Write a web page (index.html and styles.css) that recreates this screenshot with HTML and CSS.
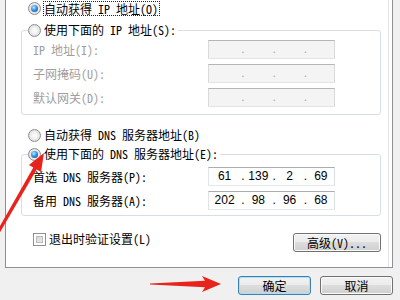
FILE: index.html
```html
<!DOCTYPE html>
<html lang="zh-CN">
<head>
    <meta charset="UTF-8">
    <meta name="viewport" content="width=device-width, initial-scale=1.0">
    <title>Internet 协议版本 4 (TCP/IPv4) 属性</title>
    <link rel="stylesheet" href="styles.css">
</head>
<body>
    <div class="pagina">
        <label class="opcion primera"><span class="radio marcado"></span><span class="foco">自动获得 IP 地址(O)</span></label>

        <fieldset class="grupo ip">
            <legend><label class="opcion"><span class="radio"></span>使用下面的 IP 地址(S):</label></legend>
            <div class="campo apagado">
                <span class="etiqueta">IP 地址(I):</span>
                <div class="ipbox"><span class="seg"></span><span class="seg"><i>.</i></span><span class="seg"><i>.</i></span><span class="seg"><i>.</i></span></div>
            </div>
            <div class="campo apagado">
                <span class="etiqueta">子网掩码(U):</span>
                <div class="ipbox"><span class="seg"></span><span class="seg"><i>.</i></span><span class="seg"><i>.</i></span><span class="seg"><i>.</i></span></div>
            </div>
            <div class="campo apagado">
                <span class="etiqueta">默认网关(D):</span>
                <div class="ipbox"><span class="seg"></span><span class="seg"><i>.</i></span><span class="seg"><i>.</i></span><span class="seg"><i>.</i></span></div>
            </div>
        </fieldset>

        <label class="opcion dns-auto"><span class="radio"></span>自动获得 DNS 服务器地址(B)</label>

        <fieldset class="grupo dns">
            <legend><label class="opcion"><span class="radio marcado"></span>使用下面的 DNS 服务器地址(E):</label></legend>
            <div class="campo">
                <span class="etiqueta">首选 DNS 服务器(P):</span>
                <div class="ipbox"><span class="seg"><b>61</b></span><span class="seg"><i>.</i><b>139</b></span><span class="seg"><i>.</i><b>2</b></span><span class="seg"><i>.</i><b>69</b></span></div>
            </div>
            <div class="campo">
                <span class="etiqueta">备用 DNS 服务器(A):</span>
                <div class="ipbox"><span class="seg"><b>202</b></span><span class="seg"><i>.</i><b>98</b></span><span class="seg"><i>.</i><b>96</b></span><span class="seg"><i>.</i><b>68</b></span></div>
            </div>
        </fieldset>

        <div class="pie">
            <label class="casilla"><span class="check"></span>退出时验证设置(L)</label>
            <button class="boton avanzado">高级(V)...</button>
        </div>
    </div>

    <div class="acciones">
        <button class="boton defecto">确定</button>
        <button class="boton">取消</button>
    </div>

    <!-- flechas rojas de la captura -->
    <svg class="flechas" width="400" height="300" viewBox="0 0 400 300">
        <polygon points="44,153 41,172.1 36.7,169.6 -3.3,237.8 -5.9,236.3 33.3,167.6 28.9,165.1" fill="#e8231b"/>
        <polygon points="221,284 202,292 205,287.2 150,284.6 150,283.6 205,280.8 202,276" fill="#e8231b"/>
    </svg>
</body>
</html>
```

FILE: styles.css
```css
*{
    box-sizing: border-box;
}
body{
    margin: 0;
    width: 400px;
    height: 300px;
    overflow: hidden;
    position: relative;
    background-color: #f0f0f0;
    color: #000;
    font: 12px/16px "Noto Sans Mono CJK SC", "Noto Sans CJK SC", sans-serif;
}
.pagina{
    margin-left: 5px;
    width: 388px;
    height: 268px;
    background-color: #fff;
    border: 1px solid #8e9096;
    border-top: none;
    padding: 0 11px 0 15px;
    box-shadow: inset -3px 0 0 #fff, inset -4px 0 0 #e4e4e4;
}
.opcion{
    display: flex;
    align-items: center;
    gap: 3px;
    height: 16px;
    white-space: nowrap;
}
.primera{
    padding-left: 7px;
}
.foco{
    border: 1px dotted #222;
    line-height: 13px;
    padding: 0 1px 0 0;
    margin-left: -1px;
}
.radio{
    flex: none;
    position: relative;
    width: 13px;
    height: 13px;
    border-radius: 50%;
    border: 1px solid #8e8f8f;
    background: radial-gradient(circle at 50% 50%, #fff 0, #f3f3f3 35%, #cfcfcf 100%);
}
.radio.marcado::after{
    content: "";
    position: absolute;
    left: 2px;
    top: 2px;
    width: 7px;
    height: 7px;
    border-radius: 50%;
    background: radial-gradient(circle at 40% 35%, #b4ecff 0, #3b93e0 45%, #0d3a78 100%);
}
.grupo{
    margin: 6px 0 0;
    padding: 2px 6px 7px;
    border: 1px solid #d5dfe5;
    border-radius: 3px;
    min-width: 0;
}
.grupo legend{
    padding: 0 2px 0 0;
}
.dns{
    margin-top: 3px;
    padding-top: 5px;
    padding-bottom: 5px;
}
.dns-auto{
    margin-top: 12px;
    padding-left: 7px;
}
.campo{
    display: flex;
    align-items: center;
    height: 19px;
    padding-left: 5px;
}
.campo + .campo{
    margin-top: 5px;
}
.etiqueta{
    width: 175px;
    white-space: nowrap;
}
.apagado .etiqueta{
    color: #9e9e9e;
}
.ipbox{
    display: flex;
    width: 127px;
    height: 19px;
    border: 1px solid;
    border-color: #abadb3 #dbdfe6 #e3e9ef #e2e3ea;
    background-color: #fff;
    font: 12px/17px "Liberation Sans", sans-serif;
}
.apagado .ipbox{
    background-color: #f4f4f4;
    border-color: #b5b5b5 #d9d9d9 #e4e4e4 #d9d9d9;
    color: #a8a8a8;
}
.seg{
    flex: 1;
    display: flex;
}
.seg i{
    font-style: normal;
    width: 5px;
    padding-left: 1px;
}
.seg b{
    flex: 1;
    font-weight: normal;
    text-align: center;
}
.pie{
    display: flex;
    justify-content: space-between;
    align-items: flex-start;
    margin-top: 15px;
    padding-left: 12px;
}
.casilla{
    display: flex;
    align-items: center;
    gap: 3px;
    height: 16px;
}
.check{
    width: 13px;
    height: 13px;
    border: 1px solid #8e8f8f;
    background: linear-gradient(135deg, #c9cdd2, #f4f4f4);
    box-shadow: inset 0 0 0 2px #fff, inset 0 0 0 3px #b8bcc1;
}
.boton{
    height: 19px;
    padding: 0;
    border: 1px solid #707070;
    border-radius: 3px;
    background: linear-gradient(#f2f2f2 0%, #ebebeb 49%, #dddddd 50%, #cfcfcf 100%);
    box-shadow: inset 0 0 0 1px #fbfbfb;
    font: inherit;
    line-height: 17px;
    color: #000;
}
.avanzado{
    width: 88px;
    margin-top: 2px;
}
.acciones{
    display: flex;
    justify-content: flex-end;
    gap: 9px;
    margin-top: 8px;
    padding-right: 7px;
}
.acciones .boton{
    width: 73px;
}
.defecto{
    border-color: #3c7fb1;
    box-shadow: inset 0 0 0 1px #a9e2f8;
}
.flechas{
    position: absolute;
    left: 0;
    top: 0;
    pointer-events: none;
}
```
